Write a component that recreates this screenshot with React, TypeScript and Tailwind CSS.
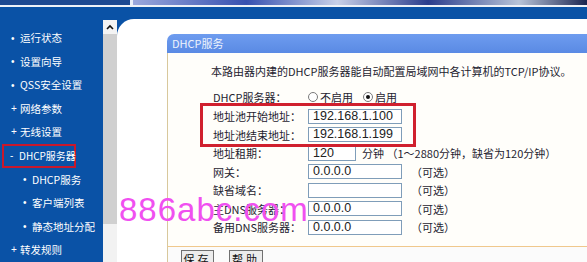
import React from "react";

const cjk = { fontFamily: '"Noto Sans CJK SC", "Liberation Sans", sans-serif' };
const latin = { fontFamily: '"Liberation Sans", Arial, sans-serif' };

function MenuItem({ mark, text, sub, boxed }: { mark: string; text: string; sub?: boolean; boxed?: boolean }) {
  return (
    <div className="h-[25px] flex items-center">
      <div
        className={
          boxed
            ? "ml-[2px] w-[74px] h-[24px] border-2 border-[#c8182c] flex items-center pl-[6px]"
            : sub
            ? "flex items-center pl-[23px]"
            : "flex items-center pl-[11px]"
        }
      >
        <span className="w-[9px] shrink-0 text-[10px] leading-none text-white" style={latin}>
          {mark}
        </span>
        <span
          className={`${boxed ? "text-[10px]" : "text-[10.5px]"} leading-none text-white whitespace-nowrap`}
          style={cjk}
        >
          {text}
        </span>
      </div>
    </div>
  );
}

function Field({
  label,
  value,
  w = "w-[94px]",
  extra,
  gap = "ml-[9px]",
}: {
  label: string;
  value: string;
  w?: string;
  extra?: string;
  gap?: string;
}) {
  return (
    <div className="h-[18.5px] flex items-center">
      <div className="w-[97px] shrink-0 pl-[2px] text-[11px] text-[#1e2330] whitespace-nowrap" style={cjk}>
        {label}
      </div>
      <div
        className={`${w} shrink-0 h-[15px] border border-[#7f9db9] bg-white flex items-center pl-[4px] text-[12.5px] text-[#222]`}
        style={latin}
      >
        {value}
      </div>
      {extra && (
        <div className={`${gap} text-[11px] text-[#1e2330] whitespace-nowrap`} style={cjk}>
          {extra}
        </div>
      )}
    </div>
  );
}

export default function App() {
  return (
    <div className="relative w-[587px] h-[262px] overflow-hidden bg-white">
      {/* top banner */}
      <div className="flex h-[5px]">
        <div className="w-[130px] shrink-0 bg-[#1d4a92]" />
        <div className="w-[3px] shrink-0 bg-[#e8eef8]" />
        <div className="flex-1 bg-[linear-gradient(90deg,#9aa8dc_0%,#3650b0_25%,#c8d0e8_45%,#2a3c8c_65%,#b8c4d8_85%,#1a2450_100%)]" />
      </div>
      <div className="h-[2px] bg-[#eef2f8]" />
      <div className="h-[12px] bg-[#0a52a6]" />

      {/* main */}
      <div className="flex h-[243px] bg-[#0a52a6]">
        {/* sidebar */}
        <div className="w-[103px] shrink-0 pt-[8px] flex flex-col">
          <MenuItem mark="•" text="运行状态" />
          <MenuItem mark="•" text="设置向导" />
          <MenuItem mark="•" text="QSS安全设置" />
          <MenuItem mark="+" text="网络参数" />
          <MenuItem mark="+" text="无线设置" />
          <MenuItem mark="-" text="DHCP服务器" boxed />
          <MenuItem mark="•" text="DHCP服务" sub />
          <MenuItem mark="•" text="客户端列表" sub />
          <MenuItem mark="•" text="静态地址分配" sub />
          <MenuItem mark="+" text="转发规则" />
        </div>

        {/* scrollbar */}
        <div className="w-[14px] shrink-0 flex flex-col mt-[1px]">
          <div className="h-[14px] bg-[#f4f4f4] flex items-center justify-center">
            <svg width="8" height="6" viewBox="0 0 8 6">
              <path d="M1 5 L4 2 L7 5" stroke="#111" strokeWidth="1.6" fill="none" />
            </svg>
          </div>
          <div className="h-[190px] bg-[#d0d0d0]" />
          <div className="flex-1 bg-[#f2f2f2]" />
        </div>

        {/* content */}
        <div className="flex-1 min-w-0 bg-white rounded-tl-[17px] pl-[50px] pt-[15px] overflow-hidden">
          <div className="w-[440px] rounded-tl-[7px] overflow-hidden">
            <div className="h-[19px] bg-[linear-gradient(180deg,#6e9cef,#5a8ae4)] flex items-center pl-[5px]">
              <span className="text-[11px] text-[#eef3fc]" style={cjk}>
                DHCP服务
              </span>
            </div>
            <div className="relative border-l border-[#d8c89c] border-b border-b-[#f0c88c] bg-[#fffefa] h-[194px] pl-[43px] pt-[11px]">
              <div className="h-[14px] flex items-center text-[11px] text-[#1e2330] whitespace-nowrap" style={cjk}>
                本路由器内建的DHCP服务器能自动配置局域网中各计算机的TCP/IP协议。
              </div>
              <div className="mt-[9px] h-[20px] flex items-center">
                <div className="w-[97px] pl-[2px] text-[11px] text-[#1e2330]" style={cjk}>
                  DHCP服务器：
                </div>
                <div className="flex items-center gap-[2px] text-[11px] text-[#1e2330]" style={cjk}>
                  <span className="w-[10px] h-[10px] rounded-full border border-[#7a7a7a] bg-white" />
                  <span>不启用</span>
                </div>
                <div className="ml-[10px] flex items-center gap-[2px] text-[11px] text-[#1e2330]" style={cjk}>
                  <span className="w-[10px] h-[10px] rounded-full border border-[#7a7a7a] bg-white flex items-center justify-center">
                    <span className="w-[4px] h-[4px] rounded-full bg-[#111]" />
                  </span>
                  <span>启用</span>
                </div>
              </div>
              <Field label="地址池开始地址：" value="192.168.1.100" />
              <Field label="地址池结束地址：" value="192.168.1.199" />
              <Field label="地址租期：" value="120" w="w-[48px]" gap="ml-[6px]" extra="分钟 （1～2880分钟，缺省为120分钟）" />
              <Field label="网关：" value="0.0.0.0" extra="（可选）" />
              <Field label="缺省域名：" value="" extra="（可选）" />
              <Field label="主DNS服务器：" value="0.0.0.0" extra="（可选）" />
              <Field label="备用DNS服务器：" value="0.0.0.0" extra="（可选）" />

              {/* highlight box */}
              <div className="absolute left-[32px] top-[50px] w-[216px] h-[44px] border-[3px] border-[#d0202e]" />
            </div>
            <div className="border-l border-[#d8c89c] bg-[#fbfbfb] h-[20px] pl-[13px] pt-[3px] flex gap-[15px]">
              <div className="w-[33px] h-[18px] border border-[#707070] bg-[#ececec] flex items-center justify-center text-[11px] tracking-[3px] text-[#111]" style={cjk}>
                保存
              </div>
              <div className="w-[34px] h-[18px] border border-[#707070] bg-[#ececec] flex items-center justify-center text-[11px] tracking-[3px] text-[#111]" style={cjk}>
                帮助
              </div>
            </div>
          </div>
        </div>
      </div>

      {/* watermark */}
      <div className="absolute left-[119px] top-[193px] text-[33px] tracking-[1px] leading-none text-[#f050f0]" style={latin}>
        886abc.com
      </div>
    </div>
  );
}
